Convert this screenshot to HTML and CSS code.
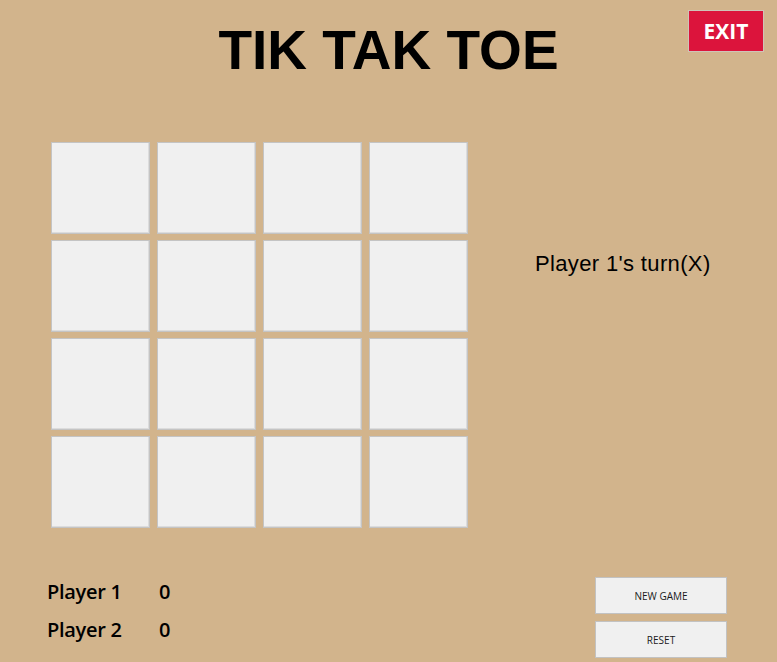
FILE: index.html
```html
<!DOCTYPE html>
<html>
<head>
<meta charset="utf-8">
<title>TIK TAK TOE</title>
<link rel="stylesheet" href="styles.css">
</head>
<body>
<div class="app">
  <header class="header">
    <div class="spacer"></div>
    <h1 class="title">TIK TAK TOE</h1>
    <div class="exit-wrap"><button class="exit">EXIT</button></div>
  </header>
  <main class="main">
    <div class="board">
      <div class="cell"></div><div class="cell"></div><div class="cell"></div><div class="cell"></div>
      <div class="cell"></div><div class="cell"></div><div class="cell"></div><div class="cell"></div>
      <div class="cell"></div><div class="cell"></div><div class="cell"></div><div class="cell"></div>
      <div class="cell"></div><div class="cell"></div><div class="cell"></div><div class="cell"></div>
    </div>
    <div class="status">Player 1's turn(X)</div>
  </main>
  <footer class="footer">
    <div class="scores">
      <div class="score-row"><span class="name">Player 1</span><span class="pts">0</span></div>
      <div class="score-row"><span class="name">Player 2</span><span class="pts">0</span></div>
    </div>
    <div class="actions">
      <button class="btn">NEW GAME</button>
      <button class="btn">RESET</button>
    </div>
  </footer>
</div>
</body>
</html>
```
FILE: styles.css
```css
* { box-sizing: border-box; }
html, body {
  margin: 0;
  padding: 0;
  background: #d2b48c;
}
.app {
  width: 777px;
  height: 662px;
  overflow: hidden;
  background: #d2b48c;
}
.header {
  height: 142px;
  padding-top: 10px;
  display: grid;
  grid-template-columns: 1fr auto 1fr;
  align-items: start;
}
.title {
  margin: 8px 0 0 0;
  font-family: "Liberation Sans", Arial, sans-serif;
  font-weight: bold;
  font-size: 55px;
  line-height: normal;
  color: #000;
}
.exit-wrap {
  display: flex;
  justify-content: flex-end;
  padding-right: 13px;
}
.exit {
  width: 76px;
  height: 42px;
  background: #dc143c;
  border: 1px solid #cfc3b8;
  color: #fff;
  font-family: "Open Sans", "Noto Sans", sans-serif;
  font-weight: bold;
  font-size: 21px;
  padding: 0;
  margin: 0;
}
.main {
  display: flex;
  align-items: flex-start;
  padding-left: 51px;
}
.board {
  display: grid;
  grid-template-columns: repeat(4, 99px);
  grid-template-rows: repeat(4, 92px);
  gap: 6px 7px;
}
.cell {
  background: #f0f0f0;
  border: 1px solid #c4c4c4;
  box-shadow: inset -1px -1px 0 #dcdcdc;
}
.status {
  margin-left: 67px;
  margin-top: 109px;
  font-family: "Liberation Sans", Arial, sans-serif;
  font-size: 22px;
  letter-spacing: 0.35px;
  line-height: normal;
  color: #000;
  white-space: nowrap;
}
.footer {
  margin-top: 49px;
  display: flex;
  justify-content: space-between;
  align-items: flex-start;
  padding-left: 47px;
  padding-right: 50px;
}
.scores {
  display: flex;
  flex-direction: column;
  gap: 8px;
}
.score-row {
  display: grid;
  grid-template-columns: 112px auto;
  font-family: "Open Sans", "Noto Sans", sans-serif;
  font-weight: 600;
  font-size: 20px;
  letter-spacing: -0.3px;
  line-height: 30px;
  color: #000;
}
.actions {
  display: flex;
  flex-direction: column;
  gap: 7px;
}
.btn {
  width: 132px;
  height: 37px;
  background: #f0f0f0;
  border: 1px solid #c2c2c2;
  font-family: "Open Sans", "Noto Sans", sans-serif;
  font-size: 10px;
  color: #1a1a1a;
  padding: 0;
  margin: 0;
}
```
